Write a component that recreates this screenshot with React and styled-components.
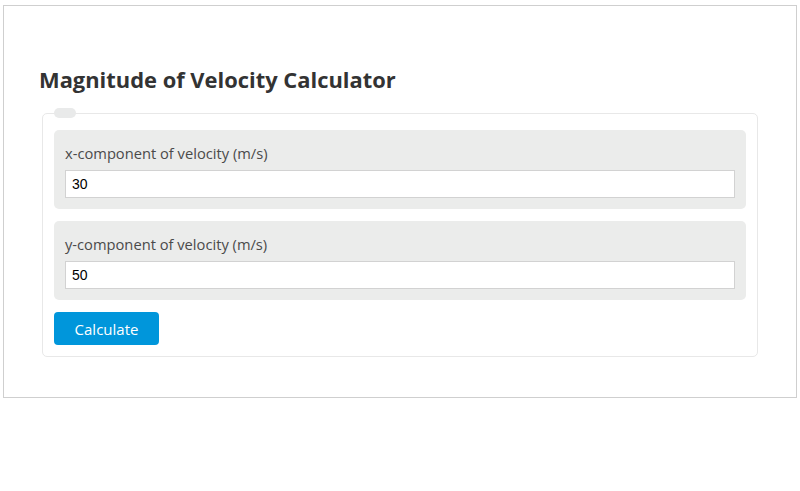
import styled, { createGlobalStyle } from 'styled-components';

const GlobalStyle = createGlobalStyle`
  body {
    margin: 0;
    background: #fff;
    font-family: "Open Sans", "Noto Sans", sans-serif;
  }
`;

const FIELDS = [
  { id: 'vx', label: 'x-component of velocity (m/s)', value: '30' },
  { id: 'vy', label: 'y-component of velocity (m/s)', value: '50' },
];

function App() {
  return (
    <>
      <GlobalStyle />
      <Page>
        <Panel>
          <Title>Magnitude of Velocity Calculator</Title>
          <Form onSubmit={(e) => e.preventDefault()}>
            <Legend />
            <Fields>
              {FIELDS.map((field) => (
                <FieldBox key={field.id}>
                  <Label htmlFor={field.id}>{field.label}</Label>
                  <Input id={field.id} defaultValue={field.value} />
                </FieldBox>
              ))}
              <Button type="submit">Calculate</Button>
            </Fields>
          </Form>
        </Panel>
      </Page>
    </>
  );
}

export default App;

const Page = styled.div`
  padding: 5px 3px;
`;

const Panel = styled.div`
  box-sizing: border-box;
  height: 393px;
  padding: 59px 38px 0;
  border: 1px solid #cfcfcf;
`;

const Title = styled.h1`
  margin: 0 0 0 -3px;
  font-size: 21.9px;
  font-weight: 700;
  line-height: 30px;
  color: #333;
`;

const Form = styled.form`
  position: relative;
  margin-top: 18px;
  border: 1px solid #e8e8e8;
  border-radius: 5px;
  padding: 16px 11px 11px;
`;

const Legend = styled.span`
  position: absolute;
  top: -6px;
  left: 11px;
  width: 22px;
  height: 10px;
  border-radius: 5px;
  background: #e9eaea;
`;

const Fields = styled.div`
  display: flex;
  flex-direction: column;
  align-items: flex-start;
  gap: 12px;
`;

const FieldBox = styled.div`
  align-self: stretch;
  display: flex;
  flex-direction: column;
  gap: 7px;
  padding: 13px 11px 11px;
  background: #ebeceb;
  border-radius: 5px;
`;

const Label = styled.label`
  font-size: 14.7px;
  line-height: 20px;
  color: #4a4a4a;
`;

const Input = styled.input`
  box-sizing: border-box;
  height: 28px;
  padding: 0 6px;
  border: 1px solid #d2d2d2;
  background: #fff;
  font-family: "Liberation Sans", Arial, sans-serif;
  font-size: 14px;
  color: #000;
  outline: none;
`;

const Button = styled.button`
  width: 105px;
  height: 33px;
  border: none;
  border-radius: 4px;
  background: #0096db;
  color: #fff;
  font-family: "Open Sans", "Noto Sans", sans-serif;
  font-size: 15px;
  cursor: pointer;
`;
